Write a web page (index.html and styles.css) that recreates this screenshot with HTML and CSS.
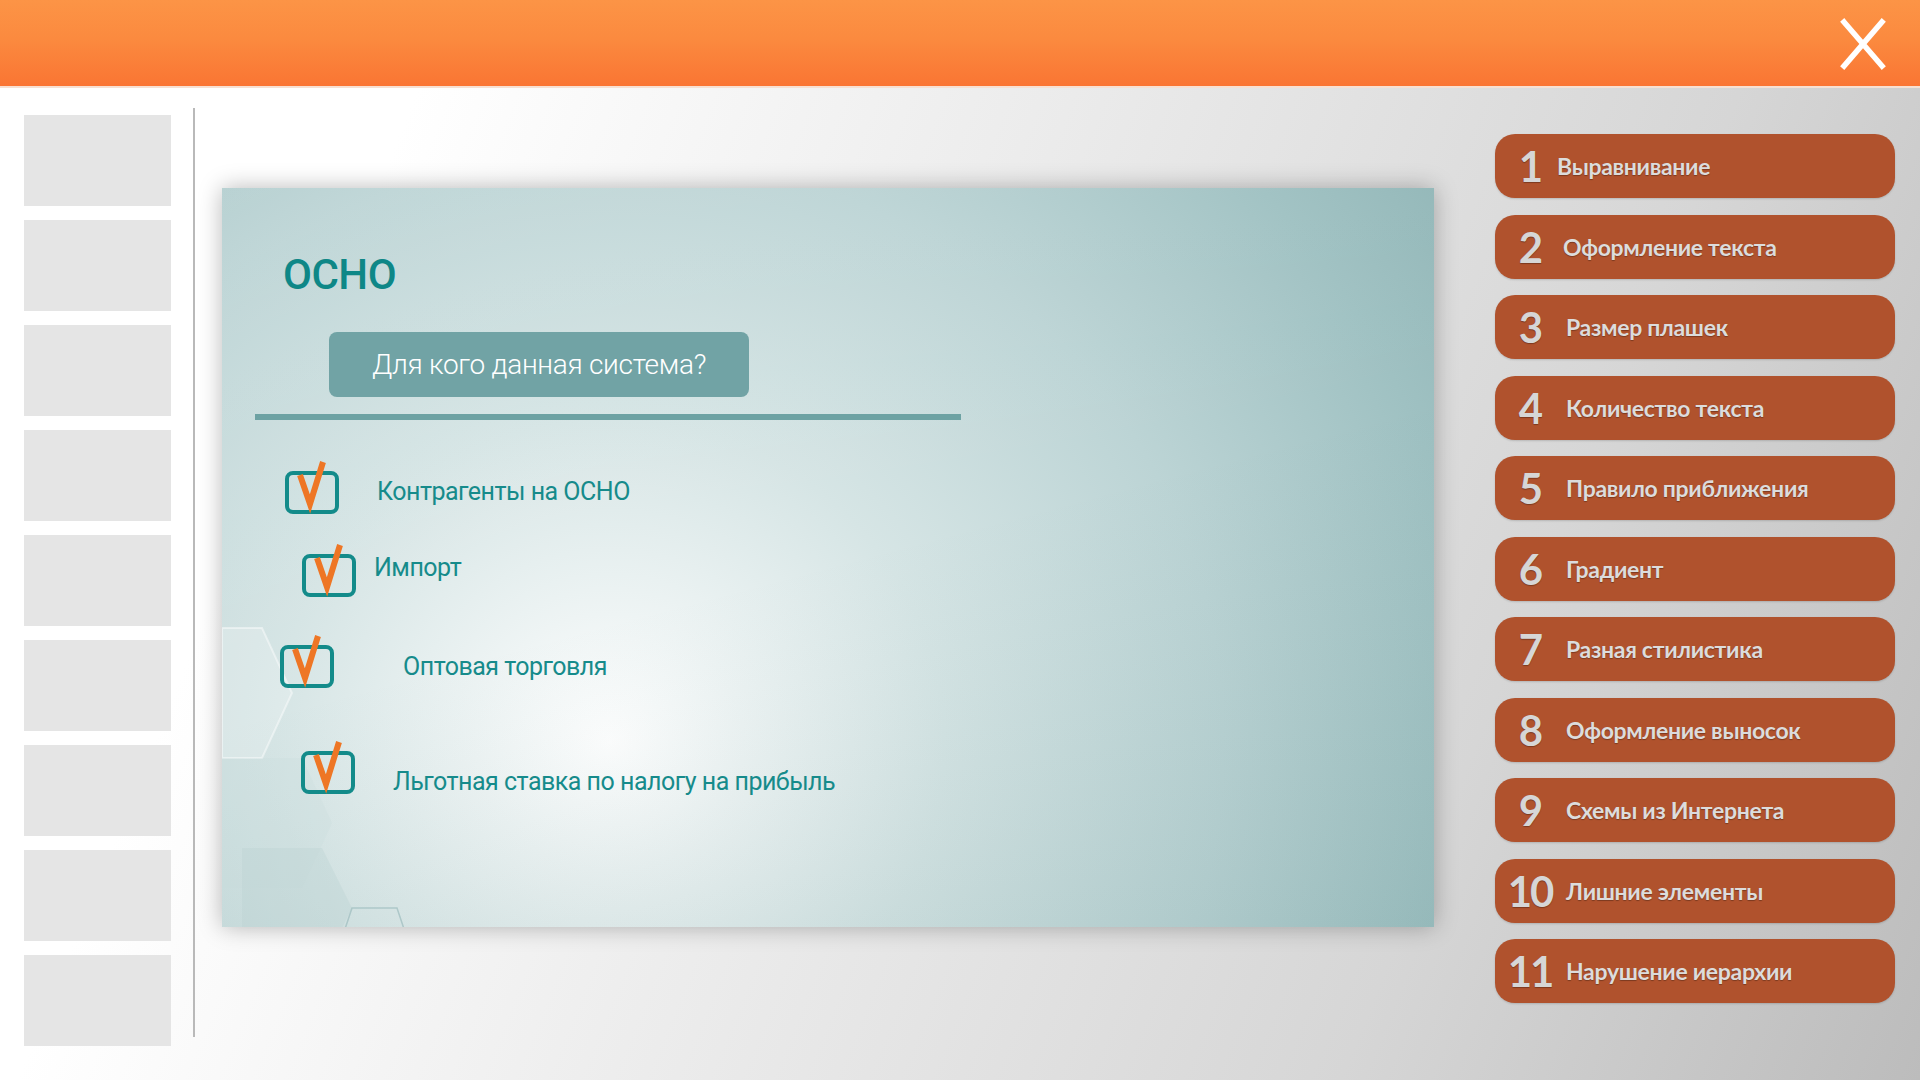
FILE: index.html
```html
<!DOCTYPE html>
<html lang="ru">
<head>
<meta charset="utf-8">
<title>ОСНО</title>
<link rel="stylesheet" href="styles.css">
</head>
<body>
<div class="app">
  <header class="topbar">
    <svg class="close" width="46" height="52" viewBox="0 0 46 52">
      <path d="M4 4 L42 48 M42 4 L4 48" stroke="#fff" stroke-width="5.5" stroke-linecap="square" fill="none"/>
    </svg>
  </header>
  <main class="main">
    <div class="thumbs">
      <div class="thumb"></div><div class="thumb"></div><div class="thumb"></div>
      <div class="thumb"></div><div class="thumb"></div><div class="thumb"></div>
      <div class="thumb"></div><div class="thumb"></div><div class="thumb"></div>
    </div>
    <div class="divider"></div>
    <section class="stage">
      <svg class="hexes" width="260" height="320" viewBox="0 0 260 320">
        <polygon points="0,20 40,20 70,85 40,150 0,150" fill="#ffffff" fill-opacity="0.2" stroke="#ffffff" stroke-opacity="0.45" stroke-width="2"/>
        <polygon points="-10,150 80,150 110,215 80,280 -10,280" fill="#c9dcdc" fill-opacity="0.25"/>
        <polygon points="20,240 100,240 130,300 100,360 20,360" fill="#b9d1d2" fill-opacity="0.35"/>
        <polygon points="130,300 175,300 185,330 120,330" fill="none" stroke="#9cbcbe" stroke-opacity="0.7" stroke-width="1.5"/>
      </svg>
      <h1 class="title">ОСНО</h1>
      <div class="question">Для кого данная система?</div>
      <div class="rule"></div>
      <ul class="items">
        <li class="item item-1">
          <svg class="chk" width="54" height="56" viewBox="0 0 54 56"><rect x="2" y="13" width="50" height="39" rx="6" fill="none" stroke="#138b8a" stroke-width="4"/><path d="M15 15 L25 44 L38 2" fill="none" stroke="#ee7625" stroke-width="6"/></svg>
          <span class="label">Контрагенты на ОСНО</span>
        </li>
        <li class="item item-2">
          <svg class="chk" width="54" height="56" viewBox="0 0 54 56"><rect x="2" y="13" width="50" height="39" rx="6" fill="none" stroke="#138b8a" stroke-width="4"/><path d="M15 15 L25 44 L38 2" fill="none" stroke="#ee7625" stroke-width="6"/></svg>
          <span class="label">Импорт</span>
        </li>
        <li class="item item-3">
          <svg class="chk" width="54" height="56" viewBox="0 0 54 56"><rect x="2" y="13" width="50" height="39" rx="6" fill="none" stroke="#138b8a" stroke-width="4"/><path d="M15 15 L25 44 L38 2" fill="none" stroke="#ee7625" stroke-width="6"/></svg>
          <span class="label">Оптовая торговля</span>
        </li>
        <li class="item item-4">
          <svg class="chk" width="54" height="56" viewBox="0 0 54 56"><rect x="2" y="13" width="50" height="39" rx="6" fill="none" stroke="#138b8a" stroke-width="4"/><path d="M15 15 L25 44 L38 2" fill="none" stroke="#ee7625" stroke-width="6"/></svg>
          <span class="label">Льготная ставка по налогу на прибыль</span>
        </li>
      </ul>
    </section>
    <nav class="menu">
      <div class="btn b1"><span class="num">1</span><span class="txt">Выравнивание</span></div>
      <div class="btn b2"><span class="num">2</span><span class="txt">Оформление текста</span></div>
      <div class="btn"><span class="num">3</span><span class="txt">Размер плашек</span></div>
      <div class="btn"><span class="num">4</span><span class="txt">Количество текста</span></div>
      <div class="btn"><span class="num">5</span><span class="txt">Правило приближения</span></div>
      <div class="btn"><span class="num">6</span><span class="txt">Градиент</span></div>
      <div class="btn"><span class="num">7</span><span class="txt">Разная стилистика</span></div>
      <div class="btn"><span class="num">8</span><span class="txt">Оформление выносок</span></div>
      <div class="btn"><span class="num">9</span><span class="txt">Схемы из Интернета</span></div>
      <div class="btn"><span class="num">10</span><span class="txt">Лишние элементы</span></div>
      <div class="btn"><span class="num">11</span><span class="txt">Нарушение иерархии</span></div>
    </nav>
  </main>
</div>
</body>
</html>
```
FILE: styles.css
```css
* { box-sizing: border-box; }
html, body { margin: 0; padding: 0; }
body {
  width: 1920px;
  height: 1080px;
  overflow: hidden;
  font-family: Roboto, "Noto Sans", sans-serif;
}
.app {
  width: 1920px;
  height: 1080px;
  display: flex;
  flex-direction: column;
}
.topbar {
  height: 88px;
  flex: none;
  background: linear-gradient(180deg, #fc9446 0%, #fb8a3f 45%, #fa7533 100%);
  border-bottom: 2px solid #f7e0d2;
  display: flex;
  justify-content: flex-end;
  align-items: flex-start;
  padding: 18px 34px 0 0;
}
.close { display: block; }
.main {
  flex: 1;
  display: flex;
  align-items: flex-start;
  background: linear-gradient(112deg, #ffffff 18%, #ececec 45%, #d6d6d6 75%, #bcbcbc 100%);
}
.thumbs {
  margin-left: 24px;
  margin-top: 27px;
  width: 147px;
  display: flex;
  flex-direction: column;
  gap: 14px;
}
.thumb {
  height: 91px;
  background: #e5e5e5;
}
.divider {
  margin-left: 22px;
  margin-top: 20px;
  width: 2px;
  height: 929px;
  background: #b9b9b9;
}
.stage {
  position: relative;
  overflow: hidden;
  margin-left: 27px;
  margin-top: 100px;
  width: 1212px;
  height: 739px;
  background:
    linear-gradient(165deg, rgba(255, 255, 255, 0.08) 0%, rgba(255, 255, 255, 0) 50%, rgba(40, 100, 100, 0.1) 100%),
    radial-gradient(ellipse 92% 145% at 32% 75%, #ffffff 0%, #eef4f4 12%, #d6e5e5 30%, #bcd4d5 55%, #9fc1c2 78%, #88afb0 100%);
  box-shadow: 0 0 22px rgba(0, 0, 0, 0.28);
  padding-top: 1px;
}
.hexes {
  position: absolute;
  left: 0;
  top: 420px;
}
.title {
  position: relative;
  margin: 65px 0 0 61px;
  font-size: 42px;
  line-height: 42px;
  font-weight: 500;
  color: #0e8787;
  letter-spacing: -0.5px;
}
.question {
  position: relative;
  margin: 36px 0 0 107px;
  width: 420px;
  height: 65px;
  border-radius: 8px;
  background: #71a3a5;
  color: #ffffff;
  font-size: 28px;
  font-weight: 300;
  display: flex;
  align-items: center;
  justify-content: center;
  letter-spacing: -0.3px;
}
.rule {
  position: relative;
  margin: 17px 0 0 33px;
  width: 706px;
  height: 6px;
  background: #6da2a3;
}
.items {
  position: relative;
  list-style: none;
  margin: 0;
  padding: 0;
}
.item {
  display: flex;
  align-items: flex-start;
}
.chk { display: block; flex: none; }
.label {
  font-size: 25px;
  line-height: 32px;
  color: #168b8b;
  letter-spacing: -0.5px;
  white-space: nowrap;
}
.item-1 { margin-top: 40px; padding-left: 63px; }
.item-1 .label { margin: 16px 0 0 38px; }
.item-2 { margin-top: 27px; padding-left: 80px; }
.item-2 .label { margin: 9px 0 0 18px; }
.item-3 { margin-top: 35px; padding-left: 58px; }
.item-3 .label { margin: 17px 0 0 69px; }
.item-4 { margin-top: 50px; padding-left: 79px; }
.item-4 .label { margin: 26px 0 0 38px; }

.menu {
  margin-left: 61px;
  margin-top: 46px;
  width: 400px;
  display: flex;
  flex-direction: column;
  gap: 16.5px;
}
.btn {
  height: 64px;
  border-radius: 20px;
  background: #b0522d;
  box-shadow: 0 1px 2px rgba(0, 0, 0, 0.15);
  display: flex;
  align-items: center;
  font-family: Lato, "Open Sans", sans-serif;
  font-weight: 700;
  color: #dcdcdc;
  text-shadow: 0 1px 1px rgba(0, 0, 0, 0.3);
}
.num {
  width: 68px;
  flex: none;
  text-align: center;
  font-size: 42px;
  letter-spacing: -2px;
  color: #d6d6d6;
  padding-left: 2px;
}
.txt {
  font-size: 23px;
  letter-spacing: -0.3px;
  padding-left: 3px;
}
.b1 .txt { margin-left: -9px; }
.b2 .txt { margin-left: -3px; }
```
